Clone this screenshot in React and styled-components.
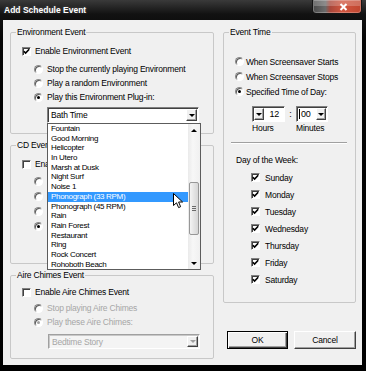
import React from 'react';
import styled, { createGlobalStyle } from 'styled-components';

const GlobalStyle = createGlobalStyle`
  html, body { margin: 0; padding: 0; background: #000; }
  * { box-sizing: border-box; }
  body { font-family: "Liberation Sans", Arial, sans-serif; }
`;

const Window = styled.div`
  width: 366px;
  height: 371px;
  display: flex;
  flex-direction: column;
  padding: 0 4px 6px 3px;
  background: linear-gradient(#3a3a3a, #121212 14px, #050505 40px, #000);
`;

const TitleBar = styled.div`
  height: 20px;
  flex: none;
  display: flex;
  align-items: flex-start;
  justify-content: space-between;
`;

const Title = styled.div`
  color: #fff;
  font-weight: bold;
  font-size: 8.5px;
  line-height: 21px;
  padding-left: 1px;
  text-shadow: 0 0 3px rgba(255, 255, 255, 0.25);
`;

const CloseButton = styled.div`
  width: 50px;
  height: 14px;
  border: 1px solid #151515;
  border-top: none;
  border-radius: 0 0 4px 4px;
  position: relative;
  display: flex;
  align-items: center;
  justify-content: flex-end;
  padding-right: 13px;
  background: linear-gradient(90deg, #4a4a4a 0, #6b6b6b 26%, #a9473a 36%, #d2563f 62%, #c04630 100%);
  box-shadow: inset 0 0 0 1px rgba(255, 255, 255, 0.25);
  &::after {
    content: '';
    position: absolute;
    left: 1px;
    right: 1px;
    top: 0;
    height: 6px;
    background: rgba(255, 255, 255, 0.22);
  }
`;

const Client = styled.div`
  flex: 1;
  background: #f0f0f0;
  display: grid;
  grid-template-columns: 204px 133px;
  column-gap: 9px;
  padding: 7px 6px 0 7px;
  font-size: 8.5px;
  line-height: 10px;
  letter-spacing: -0.2px;
  color: #000;
`;

const Column = styled.div`
  display: flex;
  flex-direction: column;
  gap: ${p => p.$gap || 0}px;
`;

const Group = styled.fieldset`
  margin: 0;
  padding: 0;
  min-width: 0;
  height: ${p => p.$h}px;
  border: 1px solid #c8c8c8;
  border-radius: 2px;
  position: relative;
`;

const Legend = styled.legend`
  margin-left: 5px;
  padding: 0 1px;
  font-size: 8.5px;
  line-height: 10px;
`;

const GroupBody = styled.div`
  padding: ${p => p.$top}px 0 0 11px;
`;

const Row = styled.label`
  display: flex;
  align-items: center;
  gap: ${p => p.$gap || 4}px;
  height: ${p => p.$h || 14}px;
  padding-left: ${p => p.$indent || 0}px;
  white-space: nowrap;
  color: ${p => (p.$disabled ? '#a6a6a6' : '#000')};
`;

const Box = styled.span`
  flex: none;
  width: 9px;
  height: 9px;
  background: #fff;
  border: 1px solid;
  border-color: #808080 #ffffff #ffffff #808080;
  box-shadow: inset 1px 1px #404040;
  display: flex;
  align-items: center;
  justify-content: center;
`;

const Circle = styled.span`
  flex: none;
  width: 9px;
  height: 9px;
  border-radius: 50%;
  background: #fff;
  border: 1px solid;
  border-color: #8a8a8a #ffffff #ffffff #8a8a8a;
  box-shadow: inset 1px 1px #5a5a5a;
  position: relative;
  &::after {
    content: '';
    display: ${p => (p.$checked ? 'block' : 'none')};
    position: absolute;
    left: 2px;
    top: 2px;
    width: 3px;
    height: 3px;
    border-radius: 50%;
    background: ${p => (p.$disabled ? '#a0a0a0' : '#000')};
  }
`;

const RadioList = styled.div`
  margin-top: ${p => p.$top || 0}px;
`;

const Combo = styled.div`
  position: relative;
  display: flex;
  width: ${p => p.$w}px;
  height: ${p => p.$h || 16}px;
  margin: ${p => p.$top || 0}px 0 0 ${p => p.$left || 0}px;
  background: ${p => (p.$disabled ? '#f4f4f4' : '#fff')};
  border: 1px solid;
  border-color: ${p => (p.$disabled ? '#a0a0a0 #fff #fff #a0a0a0' : '#808080 #fff #fff #808080')};
  box-shadow: inset 1px 1px ${p => (p.$disabled ? '#c8c8c8' : '#404040')};
`;

const ComboText = styled.div`
  flex: 1;
  padding-left: 3px;
  display: flex;
  align-items: center;
  font-size: 8.5px;
  color: ${p => (p.$disabled ? '#a6a6a6' : '#000')};
`;

const SmallButton = styled.div`
  flex: none;
  width: ${p => p.$w || 11}px;
  margin: 1px 1px 1px 0;
  background: #f0f0f0;
  border: 1px solid;
  border-color: #ffffff #404040 #404040 #ffffff;
  box-shadow: inset -1px -1px #a0a0a0;
  display: flex;
  align-items: center;
  justify-content: center;
`;

const Tri = styled.span`
  width: 0;
  height: 0;
  border-left: 3px solid transparent;
  border-right: 3px solid transparent;
  ${p => (p.$up ? 'border-bottom' : 'border-top')}: 3px solid ${p => p.$color || '#000'};
`;

const Popup = styled.div`
  position: absolute;
  top: 15px;
  left: -1px;
  width: 154px;
  height: 147px;
  z-index: 5;
  background: #fff;
  border: 1px solid #5c5c5c;
  display: flex;
`;

const ItemList = styled.div`
  flex: 1;
  position: relative;
`;

const Item = styled.div`
  height: 9.7px;
  line-height: 9.7px;
  font-size: 8px;
  letter-spacing: -0.3px;
  padding-left: 3px;
  white-space: nowrap;
  color: ${p => (p.$active ? '#fff' : '#000')};
  background: ${p => (p.$active ? '#3399ff' : 'transparent')};
`;

const Scroll = styled.div`
  flex: none;
  width: 12px;
  display: flex;
  flex-direction: column;
  background: linear-gradient(90deg, #eaeaea, #f7f7f7 40%, #f0f0f0);
`;

const ScrollArrow = styled.div`
  height: 12px;
  flex: none;
  display: flex;
  align-items: center;
  justify-content: center;
`;

const Track = styled.div`
  flex: 1;
  padding-top: ${p => p.$offset}px;
`;

const Thumb = styled.div`
  height: ${p => p.$h}px;
  margin: 0 1px;
  border: 1px solid #979797;
  border-radius: 2px;
  background: linear-gradient(90deg, #f4f4f4, #e4e4e4 50%, #d6d6d6);
  display: flex;
  align-items: center;
  justify-content: center;
`;

const Grip = styled.div`
  width: 4px;
  height: 5px;
  border-top: 1px solid #6a6a6a;
  border-bottom: 1px solid #6a6a6a;
  position: relative;
  &::after {
    content: '';
    position: absolute;
    left: 0;
    right: 0;
    top: 1px;
    border-top: 1px solid #6a6a6a;
  }
`;

const Cursor = styled.svg`
  position: absolute;
  left: 125px;
  top: 69px;
`;

const TimeRow = styled.div`
  display: flex;
  align-items: center;
  margin-top: 7px;
  padding-left: 17px;
  height: 16px;
`;

const TimeBox = styled.div`
  display: flex;
  width: ${p => p.$w}px;
  height: 16px;
  background: #fff;
  border: 1px solid;
  border-color: #808080 #fff #fff #808080;
  box-shadow: inset 1px 1px #404040;
`;

const LeftButton = styled(SmallButton)`
  margin: 1px 0 1px 1px;
`;

const TimeValue = styled.div`
  flex: 1;
  display: flex;
  align-items: center;
  justify-content: ${p => (p.$right ? 'flex-end' : 'flex-start')};
  padding: 0 ${p => (p.$right ? 5 : 0)}px 0 ${p => (p.$right ? 0 : 2)}px;
  font-size: 9px;
`;

const Caret = styled.span`
  width: 1px;
  height: 10px;
  background: #000;
  margin-right: 1px;
`;

const Colon = styled.div`
  width: 11px;
  text-align: center;
  font-size: 9px;
`;

const TimeLabels = styled.div`
  display: flex;
  height: 12px;
  align-items: center;
  padding-left: 17px;
`;

const TimeLabel = styled.div`
  width: ${p => p.$w}px;
`;

const Separator = styled.div`
  margin: 8px 0 0 -4px;
  width: 116px;
  height: 2px;
  border-top: 1px solid #a0a0a0;
  border-bottom: 1px solid #fff;
`;

const SubHeading = styled.div`
  margin: 11px 0 0 1px;
  height: 10px;
`;

const Days = styled.div`
  margin-top: 4px;
  padding-left: 16px;
`;

const Buttons = styled.div`
  display: flex;
  justify-content: flex-end;
  gap: 6px;
  margin-top: 28px;
`;

const Button = styled.div`
  width: ${p => p.$w}px;
  height: 18px;
  display: flex;
  align-items: center;
  justify-content: center;
  font-size: 8.5px;
  background: #f0f0f0;
  border: 1px solid;
  border-color: ${p => (p.$default ? '#000' : '#fff #404040 #404040 #fff')};
  box-shadow: ${p => (p.$default
    ? 'inset 1px 1px #fff, inset -1px -1px #404040, inset -2px -2px #a0a0a0'
    : 'inset -1px -1px #a0a0a0')};
`;

const CheckMark = () => (
  <svg width="7" height="7" viewBox="0 0 7 7">
    <path d="M0.8 3.2 L2.6 5.1 L6.2 1.2" fill="none" stroke="#000" strokeWidth="1.6" />
  </svg>
);

function Check({ checked, disabled, label, gap, h }) {
  return (
    <Row $gap={gap} $h={h} $disabled={disabled}>
      <Box>{checked && <CheckMark />}</Box>
      {label}
    </Row>
  );
}

function Radio({ checked, disabled, label, indent = 12, h, gap }) {
  return (
    <Row $indent={indent} $h={h} $gap={gap} $disabled={disabled}>
      <Circle $checked={checked} $disabled={disabled} />
      {label}
    </Row>
  );
}

const plugins = [
  'Fountain', 'Good Morning', 'Helicopter', 'In Utero', 'Marsh at Dusk', 'Night Surf', 'Noise 1',
  'Phonograph (33 RPM)', 'Phonograph (45 RPM)', 'Rain', 'Rain Forest', 'Restaurant', 'Ring',
  'Rock Concert', 'Rohoboth Beach',
];

const days = ['Sunday', 'Monday', 'Tuesday', 'Wednesday', 'Thursday', 'Friday', 'Saturday'];

export default function App() {
  return (
    <>
      <GlobalStyle />
      <Window>
        <TitleBar>
          <Title>Add Schedule Event</Title>
          <CloseButton>
            <svg width="9" height="8" viewBox="0 0 9 8" style={{ position: 'relative', zIndex: 1 }}>
              <path d="M1.5 1 L7.5 7 M7.5 1 L1.5 7" stroke="#fff" strokeWidth="2" />
            </svg>
          </CloseButton>
        </TitleBar>

        <Client>
          <Column $gap={6}>
            <Group $h={107}>
              <Legend>Environment Event</Legend>
              <GroupBody $top={7}>
                <Check checked label="Enable Environment Event" />
                <RadioList $top={4}>
                  <Radio label="Stop the currently playing Environment" />
                  <Radio label="Play a random Environment" />
                  <Radio checked label="Play this Environment Plug-in:" />
                </RadioList>
                <Combo $w={152} $top={3} $left={25}>
                  <ComboText>Bath Time</ComboText>
                  <SmallButton><Tri /></SmallButton>
                  <Popup>
                    <ItemList>
                      {plugins.map(name => (
                        <Item key={name} $active={name === 'Phonograph (33 RPM)'}>{name}</Item>
                      ))}
                      <Cursor width="11" height="16" viewBox="0 0 11 16">
                        <path d="M0.5 0.5 L0.5 12.5 L3.5 9.8 L5.6 14.6 L7.6 13.7 L5.6 9 L9.6 9 Z"
                          fill="#fff" stroke="#000" strokeWidth="1" strokeLinejoin="round" />
                      </Cursor>
                    </ItemList>
                    <Scroll>
                      <ScrollArrow><Tri $up /></ScrollArrow>
                      <Track $offset={46}>
                        <Thumb $h={53}><Grip /></Thumb>
                      </Track>
                      <ScrollArrow><Tri /></ScrollArrow>
                    </Scroll>
                  </Popup>
                </Combo>
              </GroupBody>
            </Group>

            <Group $h={124}>
              <Legend>CD Event</Legend>
              <GroupBody $top={7}>
                <Check label="Ena" />
                <RadioList $top={3}>
                  <Radio h={15} />
                  <Radio h={15} />
                  <Radio h={15} />
                  <Radio h={15} checked />
                </RadioList>
              </GroupBody>
            </Group>

            <Group $h={89}>
              <Legend>Aire Chimes Event</Legend>
              <GroupBody $top={5}>
                <Check label="Enable Aire Chimes Event" />
                <RadioList $top={2}>
                  <Radio disabled label="Stop playing Aire Chimes" />
                  <Radio disabled checked label="Play these Aire Chimes:" />
                </RadioList>
                <Combo $disabled $w={152} $h={15} $top={5} $left={26}>
                  <ComboText $disabled>Bedtime Story</ComboText>
                  <SmallButton><Tri $color="#a0a0a0" /></SmallButton>
                </Combo>
              </GroupBody>
            </Group>
          </Column>

          <Column>
            <Group $h={276}>
              <Legend>Event Time</Legend>
              <GroupBody $top={17}>
                <Radio indent={0} gap={2} h={15} label="When Screensaver Starts" />
                <Radio indent={0} gap={2} h={15} label="When Screensaver Stops" />
                <Radio indent={0} gap={2} h={15} checked label="Specified Time of Day:" />
                <TimeRow>
                  <TimeBox $w={33}>
                    <LeftButton $w={10}><Tri /></LeftButton>
                    <TimeValue $right>12</TimeValue>
                  </TimeBox>
                  <Colon>:</Colon>
                  <TimeBox $w={32}>
                    <TimeValue><Caret />00</TimeValue>
                    <SmallButton $w={10}><Tri /></SmallButton>
                  </TimeBox>
                </TimeRow>
                <TimeLabels>
                  <TimeLabel $w={44}>Hours</TimeLabel>
                  <TimeLabel $w={40}>Minutes</TimeLabel>
                </TimeLabels>
                <Separator />
                <SubHeading>Day of the Week:</SubHeading>
                <Days>
                  {days.map(day => (
                    <Check key={day} checked gap={5} h={17} label={day} />
                  ))}
                </Days>
              </GroupBody>
            </Group>
            <Buttons>
              <Button $default $w={61}>OK</Button>
              <Button $w={62}>Cancel</Button>
            </Buttons>
          </Column>
        </Client>
      </Window>
    </>
  );
}
